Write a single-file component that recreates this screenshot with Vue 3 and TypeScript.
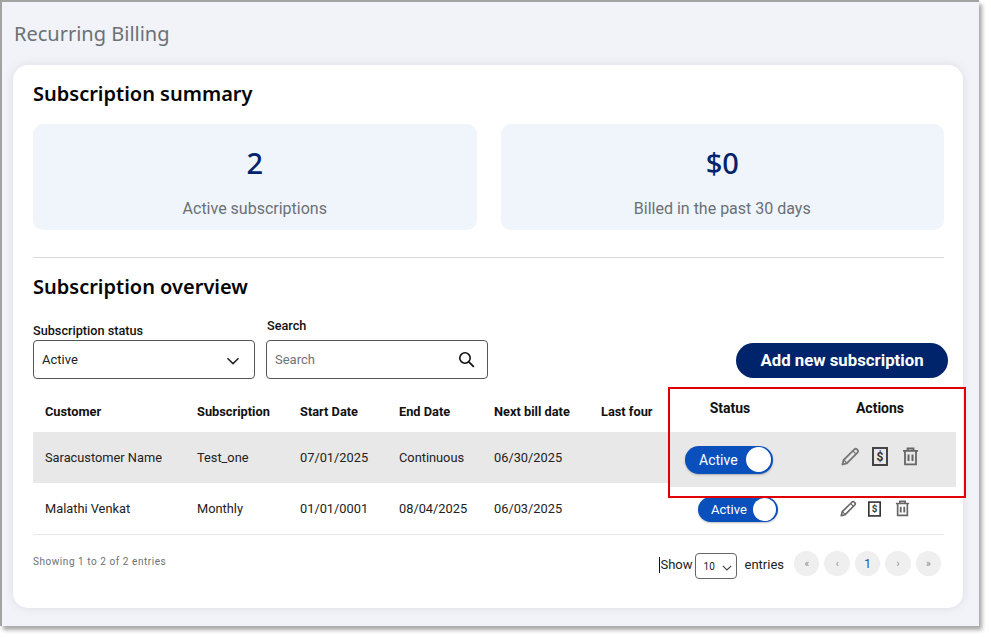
<script setup lang="ts">
interface Row { customer: string; subscription: string; start: string; end: string; next: string; last: string }
const headers: string[] = ['Customer', 'Subscription', 'Start Date', 'End Date', 'Next bill date', 'Last four']
const rows: Row[] = [
  { customer: 'Saracustomer Name', subscription: 'Test_one', start: '07/01/2025', end: 'Continuous', next: '06/30/2025', last: '' },
  { customer: 'Malathi Venkat', subscription: 'Monthly', start: '01/01/0001', end: '08/04/2025', next: '06/03/2025', last: '' },
]
const pages: string[] = ['«', '‹', '1', '›', '»']
</script>

<template>
  <div class="page">
    <div class="frame">
      <h1 class="title">Recurring Billing</h1>
      <main class="card">
        <h2 class="heading">Subscription summary</h2>
        <section class="stats">
          <div class="stat">
            <div class="stat-value">2</div>
            <div class="stat-label">Active subscriptions</div>
          </div>
          <div class="stat">
            <div class="stat-value">$0</div>
            <div class="stat-label">Billed in the past 30 days</div>
          </div>
        </section>
        <hr class="rule" />
        <h2 class="heading overview">Subscription overview</h2>

        <section class="filters">
          <label class="field">
            <span class="field-label status-label">Subscription status</span>
            <span class="box">
              <span class="box-text">Active</span>
              <svg class="chev" width="14" height="8" viewBox="0 0 14 8" fill="none"><path d="M1.5 1.2 7 6.6l5.5-5.4" stroke="#222" stroke-width="1.5" /></svg>
            </span>
          </label>
          <label class="field">
            <span class="field-label search-label">Search</span>
            <span class="box search-box">
              <input class="search-input" placeholder="Search" />
              <svg width="17" height="17" viewBox="0 0 17 17" fill="none"><circle cx="7" cy="7" r="5.2" stroke="#111" stroke-width="1.6" /><path d="m10.8 10.8 5 5" stroke="#111" stroke-width="1.8" /></svg>
            </span>
          </label>
          <button class="add-btn">Add new subscription</button>
        </section>

        <section class="table">
          <div class="table-left">
            <div class="grid head">
              <div v-for="h in headers" :key="h">{{ h }}</div>
            </div>
            <div v-for="(r, i) in rows" :key="r.customer" class="grid body-row" :class="{ shaded: i === 0 }">
              <div>{{ r.customer }}</div>
              <div>{{ r.subscription }}</div>
              <div>{{ r.start }}</div>
              <div>{{ r.end }}</div>
              <div>{{ r.next }}</div>
              <div>{{ r.last }}</div>
            </div>
          </div>
          <div class="table-right">
            <div class="right-head">
              <div class="status-col">Status</div>
              <div class="actions-col">Actions</div>
            </div>
            <div class="right-row first">
              <div class="toggle big">
                <span>Active</span>
                <i class="knob"></i>
              </div>
              <div class="actions big-actions">
                <svg width="20" height="20" viewBox="0 0 20 20" fill="none"><path d="M2.5 17.5 3.6 13 14.6 2.2c.7-.6 1.5-.6 2.1 0l1 1c.6.6.6 1.4 0 2.1L6.8 16.3Z" stroke="#777" stroke-width="1.8" stroke-linejoin="round" /><path d="m13 4 3.1 3.1M3.8 13l3 3" stroke="#777" stroke-width="1.2" /></svg>
                <svg width="16" height="19" viewBox="0 0 16 19" fill="none"><rect x="1" y="1" width="14" height="17" stroke="#444" stroke-width="2" /><text x="8" y="13.6" text-anchor="middle" class="dollar">$</text></svg>
                <svg class="trash" width="17" height="19" viewBox="0 0 17 19" fill="none"><path d="M1 3.8h15M5.5 3.5V1.5h6v2M3 4v13.3h11V4" stroke="#666" stroke-width="1.8" /><path d="M6.5 7.5v6.5M10.5 7.5v6.5" stroke="#666" stroke-width="2" /></svg>
              </div>
            </div>
            <div class="right-row second">
              <div class="toggle small">
                <span>Active</span>
                <i class="knob"></i>
              </div>
              <div class="actions small-actions">
                <svg width="18" height="18" viewBox="0 0 20 20" fill="none"><path d="M2.5 17.5 3.6 13 14.6 2.2c.7-.6 1.5-.6 2.1 0l1 1c.6.6.6 1.4 0 2.1L6.8 16.3Z" stroke="#666" stroke-width="1.8" stroke-linejoin="round" /><path d="m13 4 3.1 3.1M3.8 13l3 3" stroke="#666" stroke-width="1.2" /></svg>
                <svg width="13" height="16" viewBox="0 0 16 19" fill="none"><rect x="1" y="1" width="14" height="17" stroke="#333" stroke-width="2" /><text x="8" y="13.6" text-anchor="middle" class="dollar">$</text></svg>
                <svg class="trash" width="15" height="17" viewBox="0 0 17 19" fill="none"><path d="M1 3.8h15M5.5 3.5V1.5h6v2M3 4v13.3h11V4" stroke="#666" stroke-width="1.9" /><path d="M6.5 7.5v6.5M10.5 7.5v6.5" stroke="#666" stroke-width="2.1" /></svg>
              </div>
            </div>
          </div>
          <div class="callout"></div>
        </section>
        <hr class="row-line" />

        <footer class="footer">
          <div class="showing">Showing 1 to 2 of 2 entries</div>
          <div class="pager-wrap">
            <span class="show-text">Show</span>
            <span class="page-select">
              <span>10</span>
              <svg width="10" height="6" viewBox="0 0 10 6" fill="none"><path d="M.8.8 5 5 9.2.8" stroke="#444" stroke-width="1.2" /></svg>
            </span>
            <span class="entries">entries</span>
            <nav class="pager">
              <span v-for="p in pages" :key="p" class="pg" :class="{ num: p === '1' }">{{ p }}</span>
            </nav>
          </div>
        </footer>
      </main>
    </div>
  </div>
</template>

<style scoped>
.page {
  width: 991px;
  height: 639px;
  background: #fff;
  overflow: hidden;
  font-family: Roboto, "Liberation Sans", sans-serif;
  color: #111;
}
.frame {
  box-sizing: border-box;
  width: 979px;
  height: 626px;
  background: #f1f3f8;
  border-top: 2px solid #a3a3a3;
  border-left: 2px solid #a3a3a3;
  box-shadow: 3px 4px 4px #a8a8a8;
  padding: 0 0 0 11px;
}
.title {
  margin: 0 0 0 1px;
  padding-top: 18px;
  height: 63px;
  box-sizing: border-box;
  font: 400 20px/28px "Noto Sans", sans-serif;
  color: #6b7075;
}
.card {
  box-sizing: border-box;
  width: 950px;
  height: 543px;
  background: #fff;
  border-radius: 15px;
  padding: 14px 19px 0 20px;
  box-shadow: 0 0 10px rgba(120, 125, 140, .18);
}
.heading {
  margin: 0;
  font: 600 20px/30px "Noto Sans", sans-serif;
  color: #050505;
}
.stats {
  display: flex;
  gap: 24px;
  margin-top: 15px;
}
.stat {
  flex: 1;
  height: 106px;
  border-radius: 10px;
  background: #f0f4fb;
  text-align: center;
}
.stat-value {
  padding-top: 21px;
  font: 500 29px/36px "Noto Sans", sans-serif;
  color: #00246b;
}
.stat-label {
  margin-top: 18px;
  font: 400 16px/20px Roboto, sans-serif;
  color: #6b7075;
}
.rule {
  margin: 27px 0 0;
  border: 0;
  border-top: 1px solid #d9d9d9;
}
.overview { margin-top: 14px; }
.filters {
  display: flex;
  align-items: flex-end;
  height: 77px;
  gap: 11px;
}
.field { display: flex; flex-direction: column; width: 222px; }
.field-label {
  font: 500 12.7px/14px Roboto, sans-serif;
  color: #111;
}
.status-label { margin-bottom: 2px; }
.search-label { margin-bottom: 7px; margin-left: 1px; }
.box {
  box-sizing: border-box;
  height: 39px;
  border: 1px solid #555;
  border-radius: 4px;
  background: #fff;
  display: flex;
  align-items: center;
  justify-content: space-between;
  padding: 0 14px 0 8px;
  font-size: 13px;
}
.search-box { padding-right: 12px; }
.box-text { color: #222; }
.chev { margin-top: 2px; }
.search-input {
  border: 0;
  outline: 0;
  flex: 1;
  min-width: 0;
  padding: 0;
  font: 400 13px Roboto, sans-serif;
  background: transparent;
}
.search-input::placeholder { color: #6f7276; opacity: 1; }
.add-btn {
  margin: 0 -4px 1px auto;
  width: 212px;
  height: 35px;
  padding: 0 0 2px;
  border: 0;
  border-radius: 18px;
  background: #00246b;
  color: #fff;
  font: 700 16.8px/20px Roboto, sans-serif;
}
.table {
  position: relative;
  display: flex;
  margin-top: 12px;
  margin-right: -12px;
  height: 143px;
  font-size: 12.8px;
}
.table-left { width: 637px; }
.grid {
  display: grid;
  grid-template-columns: 152px 103px 99px 95px 107px 81px;
}
.grid > div { padding-left: 12px; white-space: nowrap; }
.head {
  height: 41px;
  align-items: center;
  font-weight: 700;
  font-size: 12.8px;
}
.body-row {
  height: 51px;
  align-items: center;
  color: #222;
}
.shaded { background: #e8e8e8; }
.table-right { width: 286px; }
.right-head {
  height: 41px;
  box-sizing: border-box;
  display: flex;
  font-weight: 700;
  font-size: 14px;
  padding-top: 9px;
  line-height: 16px;
}
.status-col { width: 120px; flex: none; text-align: center; }
.actions-col { width: 180px; flex: none; text-align: center; }
.right-row { display: flex; align-items: center; }
.first { height: 55px; background: #e8e8e8; }
.second { height: 47px; }
.toggle {
  display: flex;
  align-items: center;
  justify-content: space-between;
  background: #0a50bd;
  color: #fff;
  border-radius: 20px;
  box-sizing: border-box;
  box-shadow: 0 1px 2px rgba(0, 0, 0, .25);
}
.big {
  margin-left: 15px;
  width: 88px;
  height: 28px;
  padding: 0 2px 0 14px;
  font-size: 14px;
}
.big .knob { width: 25px; height: 25px; }
.small {
  margin-left: 28px;
  margin-top: -2px;
  width: 80px;
  height: 25px;
  padding: 0 2px 0 13px;
  font-size: 13px;
}
.small .knob { width: 23px; height: 23px; }
.knob { display: block; background: #fff; border-radius: 50%; }
.actions { display: flex; align-items: center; }
.big-actions { margin-left: 67px; gap: 12px; margin-top: -6px; }
.big-actions .trash { margin-left: 2px; }
.small-actions { margin-left: 61px; gap: 11px; margin-top: -4px; }
.small-actions .trash { margin-left: 3px; }
.dollar {
  font: 700 12px Roboto, sans-serif;
  fill: #333;
}
.callout {
  position: absolute;
  left: 635px;
  top: -4px;
  width: 298px;
  height: 111px;
  box-sizing: border-box;
  border: 2px solid #e00000;
  pointer-events: none;
}
.row-line {
  margin: 0;
  border: 0;
  border-top: 1px solid #e6e6e6;
}
.footer {
  display: flex;
  justify-content: space-between;
  align-items: flex-start;
  margin-top: 16px;
}
.showing {
  margin-top: 5px;
  font-size: 10px;
  line-height: 12px;
  letter-spacing: .55px;
  color: #6b7075;
}
.pager-wrap {
  display: flex;
  align-items: flex-start;
  font-size: 13px;
  color: #222;
  margin-right: 3px;
}
.show-text {
  border-left: 1px solid #111;
  line-height: 16px;
  margin-top: 6px;
}
.page-select {
  box-sizing: border-box;
  display: flex;
  align-items: center;
  justify-content: space-between;
  width: 42px;
  height: 26px;
  margin: 2px 0 0 2px;
  padding: 0 4px 0 8px;
  border: 1px solid #666;
  border-radius: 4px;
  font-size: 10px;
}
.page-select svg { margin-top: 3px; }
.entries { margin: 6px 0 0 8px; line-height: 16px; }
.pager { display: flex; gap: 5px; margin-left: 10px; }
.pg {
  width: 25.4px;
  height: 25px;
  border-radius: 50%;
  background: #efefef;
  display: flex;
  align-items: center;
  justify-content: center;
  font-size: 10px;
  color: #888;
}
.num { font-size: 12px; color: #0a4fa8; }
</style>

<style>
html, body { margin: 0; background: #fff; }
</style>
